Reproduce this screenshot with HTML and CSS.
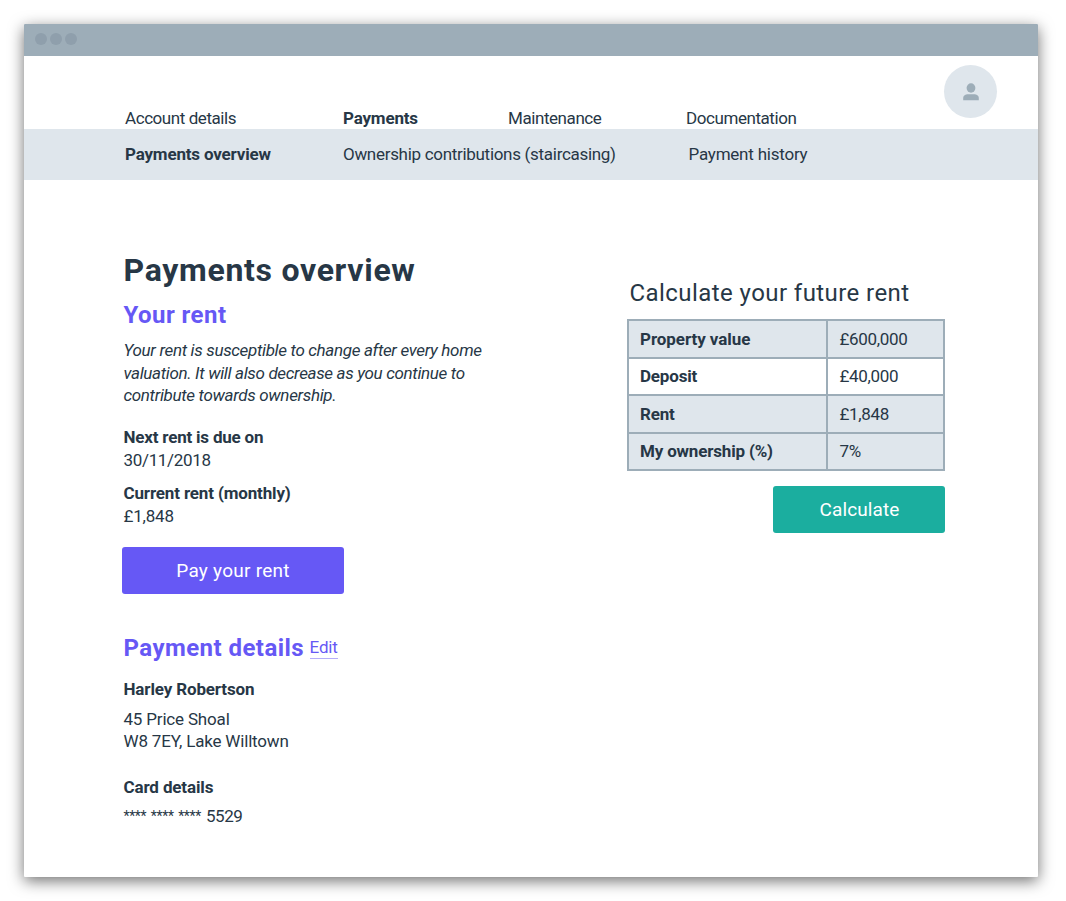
FILE: index.html
```html
<!DOCTYPE html>
<html lang="en">
<head>
<meta charset="utf-8">
<title>Payments overview</title>
<link rel="stylesheet" href="styles.css">
</head>
<body>
<div class="window">
  <div class="titlebar"><i class="dot"></i><i class="dot"></i><i class="dot"></i></div>
  <header class="header">
    <nav class="nav">
      <a class="tight">Account details</a>
      <a class="active">Payments</a>
      <a class="tight">Maintenance</a>
      <a class="tight">Documentation</a>
    </nav>
    <div class="avatar">
      <svg width="16" height="18" viewBox="0 0 16 18"><ellipse cx="8" cy="5" rx="4.4" ry="4.7"/><path d="M0.2 17.3V15C0.2 12.4 2.6 11.2 5 11.2H11C13.4 11.2 15.8 12.4 15.8 15V17.3Z"/></svg>
    </div>
  </header>
  <nav class="subnav">
    <a class="active">Payments overview</a>
    <a class="ownership">Ownership contributions (staircasing)</a>
    <a class="history">Payment history</a>
  </nav>
  <main class="main">
    <section class="overview">
      <h1>Payments overview</h1>
      <h2>Your rent</h2>
      <p class="note">Your rent is susceptible to change after every home<br>valuation. It will also decrease as you continue to<br>contribute towards ownership.</p>
      <dl class="facts">
        <div><dt class="next">Next rent is due on</dt><dd class="date">30/11/2018</dd></div>
        <div><dt>Current rent (monthly)</dt><dd class="amount">£1,848</dd></div>
      </dl>
      <button class="button pay">Pay your rent</button>
      <div class="details-head"><h2>Payment details</h2><a class="edit">Edit</a></div>
      <p class="label">Harley Robertson</p>
      <p class="address">45 Price Shoal<br>W8 7EY, Lake Willtown</p>
      <p class="label card">Card details</p>
      <p class="number"><span class="mask">**** **** ****</span><span class="last">5529</span></p>
    </section>
    <section class="calculator">
      <h3>Calculate your future rent</h3>
      <div class="table">
        <div class="key first">Property value</div><div class="value">£600,000</div>
        <div class="key plain">Deposit</div><div class="value plain">£40,000</div>
        <div class="key">Rent</div><div class="value">£1,848</div>
        <div class="key">My ownership (%)</div><div class="value percent">7%</div>
      </div>
      <button class="button calculate">Calculate</button>
    </section>
  </main>
</div>
</body>
</html>
```
FILE: styles.css
```css
* { box-sizing: border-box; }
body { margin: 0; padding: 24px; background: #fff; color: #273746; font: 17px/22.5px Roboto, sans-serif; letter-spacing: -0.18px; }
h1, h2, h3, p, dl, dd { margin: 0; }

.window { width: 1014px; height: 853px; background: #fff; box-shadow: 0 4px 15px rgba(0, 0, 0, .56); border-radius: 1px; }
.titlebar { height: 32px; display: flex; gap: 3px; padding: 9px 0 0 11px; background: #9dadb8; border-radius: 1px 1px 0 0; }
.dot { width: 12px; height: 12px; border-radius: 50%; background: #8f9fac; }

.header { height: 73px; display: flex; justify-content: space-between; padding: 0 41px 0 101px; }
.nav { align-self: flex-end; display: grid; grid-template-columns: 218px 165px 178px auto; line-height: 22px; }
.tight { letter-spacing: -0.43px; }
.active { font-weight: 700; }
.avatar { width: 53px; height: 53px; margin-top: 9px; border-radius: 50%; background: #dfe6ec; display: flex; align-items: center; justify-content: center; }
.avatar svg { fill: #9dadb8; }
.subnav { height: 51px; padding-left: 101px; display: grid; grid-template-columns: 218px 345.5px auto; align-items: center; background: #dfe6ec; }
.ownership { letter-spacing: -0.3px; }
.history { letter-spacing: -0.22px; }

.main { display: flex; justify-content: space-between; padding: 70px 93px 0 98px; }
.overview { width: 380px; padding-left: 1.5px; }
h1 { font-size: 32px; line-height: 40px; letter-spacing: .7px; }
h2 { margin-top: 10px; font-size: 24px; line-height: 30px; letter-spacing: .45px; color: #6658f5; }
.note { margin-top: 9px; font-style: italic; letter-spacing: -0.34px; white-space: nowrap; }
.facts { display: grid; gap: 11px; margin-top: 19.5px; }
.facts dt { font-weight: 700; letter-spacing: -0.15px; }
.facts .next { letter-spacing: -0.2px; }
.facts .date { letter-spacing: -0.33px; }

.button { display: block; height: 47px; padding: 0; border: 0; border-radius: 3px; color: #fff; font: 19px Roboto, sans-serif; }
.pay { width: 222px; margin: 20px 0 0 -1.5px; background: #6658f5; letter-spacing: .26px; }
.details-head { display: flex; align-items: flex-start; gap: 5.5px; margin-top: 39px; }
.details-head h2 { margin: 0; }
.edit { margin-top: 4px; height: 22px; line-height: 21px; letter-spacing: -0.2px; color: #6658f5; border-bottom: 1px solid #b4adfa; }
.label { margin-top: 15px; font-weight: 700; letter-spacing: -0.14px; }
.address { margin-top: 7px; line-height: 22px; }
.card { margin-top: 24px; }
.number { display: flex; gap: 5px; margin-top: 7px; letter-spacing: -0.4px; }
.mask { font-size: 14px; line-height: 22px; letter-spacing: -0.35px; word-spacing: 1.5px; }

.calculator { width: 318px; padding-top: 28px; }
h3 { padding-left: 2.5px; font-size: 24px; line-height: 30px; font-weight: 400; letter-spacing: .43px; }
.table { display: grid; grid-template-columns: 197px 115px; grid-template-rows: 36px 35px 36px 35px; gap: 2px; margin-top: 11px; padding: 2px; background: #9dadb8; }
.key, .value { display: flex; align-items: center; padding-left: 11px; background: #dfe6ec; }
.key { font-weight: 700; letter-spacing: -0.18px; }
.key.first { letter-spacing: -0.07px; }
.value { padding-left: 11.5px; letter-spacing: -0.32px; }
.value.percent { letter-spacing: -0.2px; }
.table .plain { background: #fff; }
.calculate { width: 172px; margin: 15px 0 0 auto; padding-left: 1px; background: #1bae9f; letter-spacing: .11px; }
```
